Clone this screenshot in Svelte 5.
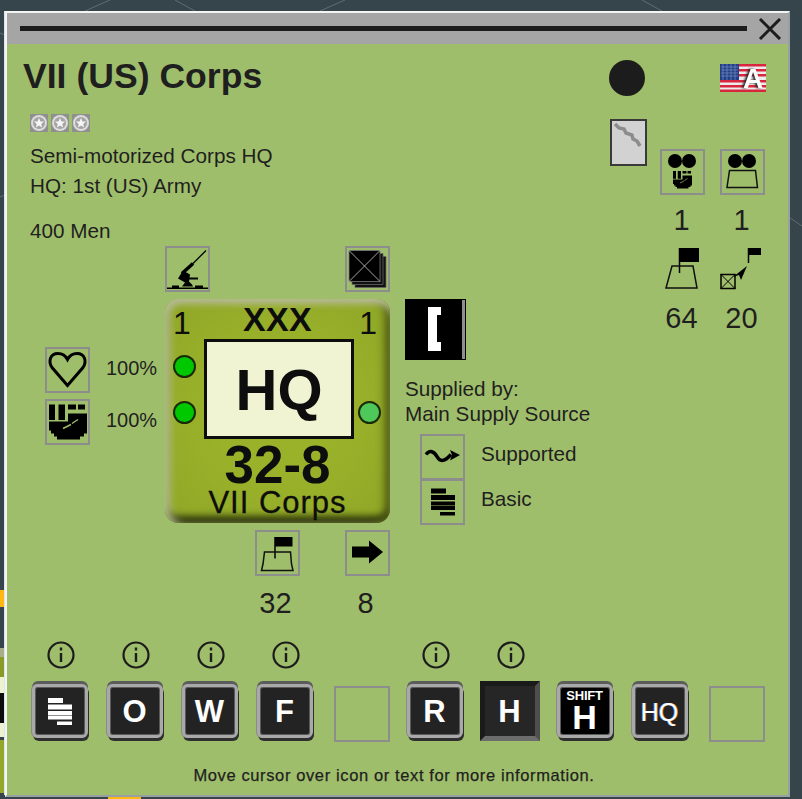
<script>
  const stars = [0, 1, 2];
  const keys = [
    { kind: 'icon', info: true },
    { kind: 'text', label: 'O', info: true },
    { kind: 'text', label: 'W', info: true },
    { kind: 'text', label: 'F', info: true },
    { kind: 'empty' },
    { kind: 'text', label: 'R', info: true },
    { kind: 'pressed', label: 'H', info: true },
    { kind: 'shift', label: 'H' },
    { kind: 'hq', label: 'HQ' },
    { kind: 'empty' }
  ];
</script>

{#snippet twoDots()}
  <circle cx="15" cy="11.500" r="7" />
  <circle cx="29" cy="11.500" r="7" />
{/snippet}

{#snippet fist()}
  <path d="M4 5h6v15.500H4zM13.500 5h6.500v15.500h-6.500zM23 5h8v5h-8zM33 5h7v5h-7zM23 14h19v8H23zM4 22h38v12h-3v3h-4v3H12v-3H9v-3H6v-3H4z" />
  <path d="M18 29l8-4M27 24l6-4" stroke="#9fbe6b" stroke-width="1.400" fill="none" />
{/snippet}

{#snippet stack()}
  <path d="M11 9h15v5H11zM11 15.500h24v5H11zM11 22h24v4H11zM11 26.500h24v4H11zM20 32.500h15V36H20z" />
{/snippet}

<div class="screen">
  <svg class="backdrop" width="802" height="799" viewBox="0 0 802 799" aria-hidden="true">
    <g stroke="#5f6d71" stroke-width="1" fill="none">
      <path d="M85 11l25-11M175 0l20 11M320 11l25-11M642 0l20 11M790 218l12 8M0 33l5 2M0 197l5-2" />
    </g>
    <rect x="0" y="590" width="4" height="17" fill="#fdb813" />
    <rect x="0" y="648" width="4" height="9" fill="#a9ad8a" />
    <rect x="0" y="657" width="4" height="20" fill="#8a9b2a" />
    <rect x="0" y="677" width="4" height="16" fill="#eef2d0" />
    <rect x="0" y="693" width="4" height="30" fill="#0c0c0c" />
    <rect x="0" y="723" width="4" height="14" fill="#eef2d0" />
    <rect x="0" y="740" width="4" height="53" fill="#93a82a" />
    <rect x="4" y="11" width="1" height="784" fill="#dfe5e6" />
    <rect x="108" y="797" width="33" height="2" fill="#fdb813" />
  </svg>

  <div class="window">
    <div class="titlebar">
      <div class="drag"></div>
      <svg class="close" width="24" height="22" viewBox="0 0 24 22" aria-label="Close">
        <path d="M2 1l20 20M22 1L2 21" stroke="#1c1c1c" stroke-width="3" fill="none" />
      </svg>
    </div>

    <div class="body">
      <section class="info">
        <h1>VII (US) Corps</h1>
        <div class="stars">
          {#each stars as s (s)}
            <svg width="18" height="18" viewBox="0 0 18 18">
              <rect width="18" height="18" fill="#8f8f8f" />
              <circle cx="9" cy="9" r="8" fill="#dcdcdc" />
              <circle cx="9" cy="9" r="6" fill="#a4a4a4" />
              <path d="M9 3.800l1.400 3.600 3.700.2-2.900 2.300 1 3.700L9 11.500l-3.200 2.100 1-3.700-2.900-2.300 3.700-.2z" fill="#f6f6f6" />
            </svg>
          {/each}
        </div>
        <p class="type">Semi-motorized Corps HQ</p>
        <p class="parent">HQ: 1st (US) Army</p>
        <p class="men">400 Men</p>
      </section>

      <section class="side">
        <div class="side-top">
          <div class="dot"></div>
          <svg class="flag" width="46" height="28" viewBox="0 0 46 28">
            <rect width="46" height="28" fill="#ececec" />
            <path d="M18 0h28v2.500H18zM18 5h28v2.500H18zM18 10h28v2.500H18zM0 16h46v2.500H0zM0 21h46v2.500H0zM0 25.500h46V28H0z" fill="#d9263f" />
            <rect width="19" height="16" fill="#1f3f88" />
            <path d="M1 3h17M1 6h17M1 9h17M1 12h17M3 0v16M7 0v16M11 0v16M15 0v16" stroke="#6f86b8" stroke-width=".8" />
            <text x="33" y="24" class="flag-a">A</text>
          </svg>
        </div>
        <div class="side-mid">
          <svg class="river" width="37" height="47" viewBox="0 0 37 47">
            <rect x="1" y="1" width="35" height="45" fill="#d2d2d2" stroke="#3a3a3a" stroke-width="2" />
            <path d="M5 5l4 4 5 1 2 4 6 2 1 4 4 2 3 5" fill="none" stroke="#8c8c8c" stroke-width="3.500" />
          </svg>
          <div class="stat-grid">
            <div class="box">
              <svg viewBox="0 0 45 45">
                {@render twoDots()}
                <g transform="translate(11 19) scale(.5)">
                  {@render fist()}
                </g>
              </svg>
            </div>
            <div class="box">
              <svg viewBox="0 0 45 45">
                {@render twoDots()}
                <path d="M9.500 21h26l2 17H7z" fill="none" stroke="#111" stroke-width="1.500" />
              </svg>
            </div>
            <span class="num">1</span>
            <span class="num">1</span>
            <div class="plain">
              <svg viewBox="0 0 45 45">
                <path d="M19 2h20v14H19z" fill="#000" />
                <path d="M19.500 2v25" stroke="#000" stroke-width="1.500" />
                <path d="M12 20h21l4 22H6z" fill="none" stroke="#111" stroke-width="1.500" />
              </svg>
            </div>
            <div class="plain">
              <svg viewBox="0 0 45 45">
                <path d="M28 2h13v7H28z" fill="#000" />
                <path d="M28.500 2v15" stroke="#000" stroke-width="1.500" />
                <path d="M13 31l14-11-6 14-2-5z" fill="#000" />
                <rect x="1" y="28.500" width="14" height="14" fill="none" stroke="#000" stroke-width="1.500" />
                <path d="M1 28.500l14 14M15 28.500l-14 14" stroke="#000" stroke-width="1" />
              </svg>
            </div>
            <span class="num low">64</span>
            <span class="num low">20</span>
          </div>
        </div>
      </section>

      <section class="vitals">
        <div class="vital">
          <div class="box">
            <svg viewBox="0 0 45 45">
              <path d="M22.500 38L7 20C3 14 5 6 13 6c5 0 8 3 9.500 6C24 9 27 6 32 6c8 0 10 8 6 14z" fill="none" stroke="#000" stroke-width="3" />
            </svg>
          </div>
          <span>100%</span>
        </div>
        <div class="vital">
          <div class="box">
            <svg viewBox="0 0 45 45">{@render fist()}</svg>
          </div>
          <span>100%</span>
        </div>
      </section>

      <section class="unit">
        <div class="unit-top">
          <div class="box">
            <svg viewBox="0 0 45 45">
              <path d="M41 4L27 18" stroke="#000" stroke-width="1.300" />
              <path d="M28 17L17 27" stroke="#000" stroke-width="3.500" />
              <path d="M13 32l5-8 7 4-1 7 3 3 1 2H17l3-4z" fill="#000" />
              <path d="M24 31h9v2h-9zM2 41h41v1.600H2zM7 39h7v2H7zM30 39h8v2h-8z" fill="#000" />
            </svg>
          </div>
          <div class="box">
            <svg viewBox="0 0 45 45">
              <path d="M10 10h31v31H10z" fill="#111" stroke="#666" stroke-width=".800" />
              <path d="M7 7h31v31H7z" fill="#111" stroke="#666" stroke-width=".800" />
              <path d="M4 4h31v31H4z" fill="#000" stroke="#777" stroke-width=".800" />
              <path d="M4 4l31 31M35 4L4 35" stroke="#cfcfcf" stroke-width=".800" />
            </svg>
          </div>
        </div>

        <div class="counter">
          <div class="counter-head">
            <span class="corner">1</span>
            <span class="echelon">XXX</span>
            <span class="corner end">1</span>
          </div>
          <div class="counter-mid">
            <div class="lamps">
              <i class="lamp"></i>
              <i class="lamp"></i>
            </div>
            <div class="symbol">HQ</div>
            <div class="lamps right">
              <i class="lamp pale"></i>
            </div>
          </div>
          <div class="values">32-8</div>
          <div class="unit-name">VII Corps</div>
        </div>

        <div class="unit-bottom">
          <div class="cell">
            <div class="box">
              <svg viewBox="0 0 45 45">
                <path d="M20 6.500h17.500V16H20z" fill="#000" />
                <path d="M20 6.500V28" stroke="#000" stroke-width="1.500" />
                <path d="M9.500 21.500h26l1 12 1.500 6.500H6.500L8 33.500z" fill="none" stroke="#111" stroke-width="1.500" />
              </svg>
            </div>
            <span class="num low shift-left">32</span>
          </div>
          <div class="cell">
            <div class="box">
              <svg viewBox="0 0 45 45">
                <path d="M7 16h17v-6l14 11.500L24 33v-6H7z" fill="#000" />
              </svg>
            </div>
            <span class="num low shift-left">8</span>
          </div>
        </div>
      </section>

      <section class="supply">
        <div class="bracket">
          <svg width="61" height="61" viewBox="0 0 61 61">
            <rect width="61" height="61" fill="#000" />
            <path d="M57 1h3v59h-3z" fill="#8f8f8f" />
            <path d="M23 8h13v8h-4v27h4v9H23z" fill="#fff" />
          </svg>
        </div>
        <p class="supplied">Supplied by:<br />Main Supply Source</p>
        <div class="supply-row">
          <div class="box">
            <svg viewBox="0 0 45 45">
              <path d="M6 20c4-5 8-3 11 2 3 6 8 5 14-2" fill="none" stroke="#000" stroke-width="3.500" />
              <path d="M30 15.500l10 5-10 5.500 2-5.500z" fill="#000" />
            </svg>
          </div>
          <span>Supported</span>
        </div>
        <div class="supply-row">
          <div class="box">
            <svg viewBox="0 0 45 45">{@render stack()}</svg>
          </div>
          <span>Basic</span>
        </div>
      </section>

      <section class="keys">
        {#each keys as key, i (i)}
          <div class="slot">
            <div class="info-mark">
              {#if key.info}
                <svg width="28" height="28" viewBox="0 0 28 28">
                  <circle cx="14" cy="14" r="12.500" fill="none" stroke="#1c1c1c" stroke-width="2.200" />
                  <path d="M14 6.500v3M14 12v9" stroke="#1c1c1c" stroke-width="2.400" />
                </svg>
              {/if}
            </div>
            {#if key.kind === 'empty'}
              <div class="key-empty"></div>
            {:else if key.kind === 'pressed'}
              <div class="key pressed">{key.label}</div>
            {:else if key.kind === 'shift'}
              <div class="key shift"><small>SHIFT</small><span>{key.label}</span></div>
            {:else if key.kind === 'hq'}
              <div class="key hq">{key.label}</div>
            {:else if key.kind === 'icon'}
              <div class="key">
                <svg class="key-icon" viewBox="0 0 45 45">{@render stack()}</svg>
              </div>
            {:else}
              <div class="key">{key.label}</div>
            {/if}
          </div>
        {/each}
      </section>

      <p class="hint">Move cursor over icon or text for more information.</p>
    </div>
  </div>
</div>

<style>
  :global(body) {
    margin: 0;
    background: #36454c;
  }
  .screen {
    position: relative;
    width: 802px;
    height: 799px;
    overflow: hidden;
    background: #36454c;
    font-family: "Liberation Sans", Arial, sans-serif;
    color: #1f1f1f;
  }
  .backdrop {
    position: absolute;
    inset: 0;
  }
  .window {
    position: relative;
    box-sizing: border-box;
    width: 785px;
    height: 786px;
    margin: 11px 0 0 5px;
    border-top: 2px solid #f4f4f4;
    border-left: 2px solid #f4f4f4;
    border-right: 2px solid #97a1a4;
    border-bottom: 2px solid #97a1a4;
    display: flex;
    flex-direction: column;
    background: #9fbe6b;
  }
  .titlebar {
    display: flex;
    align-items: center;
    height: 31px;
    flex: none;
    padding: 0 6px 0 13px;
    gap: 11px;
    background: #a5a5a5;
  }
  .drag {
    flex: 1;
    height: 5px;
    background: #1c1c1c;
  }
  .body {
    flex: 1;
    display: grid;
    grid-template-columns: 158px 240px 1fr 134px;
    grid-template-rows: 202px 395px 1fr;
    min-height: 0;
  }
  .info {
    grid-column: 1 / 4;
    grid-row: 1;
    padding: 14px 0 0 16px;
  }
  h1 {
    margin: 0;
    font-size: 35.600px;
    line-height: 36px;
    font-weight: 700;
  }
  .stars {
    display: flex;
    gap: 3px;
    margin: 20px 0 0 7px;
  }
  .stars svg {
    display: block;
  }
  p {
    margin: 0;
  }
  .info p {
    margin-left: 7px;
    font-size: 20.700px;
    line-height: 24px;
  }
  .type { padding-top: 12px; }
  .parent { padding-top: 6px; }
  .men { padding-top: 21px; }

  .side {
    grid-column: 3 / 5;
    grid-row: 1 / 3;
    padding-top: 15px;
    display: flex;
    flex-direction: column;
  }
  .side-top {
    display: flex;
    justify-content: space-between;
    align-items: center;
    margin-left: 204px;
    width: 157px;
    height: 38px;
  }
  .dot {
    width: 36px;
    height: 36px;
    border-radius: 50%;
    background: #1c1c1c;
  }
  .flag {
    overflow: visible;
  }
  .flag-a {
    font: 700 28px "Liberation Sans", Arial, sans-serif;
    fill: #fff;
    text-anchor: middle;
    filter: drop-shadow(-1.500px 0 1px #222);
  }
  .side-mid {
    display: flex;
    margin: 22px 0 0 205px;
  }
  .river {
    display: block;
  }
  .stat-grid {
    display: grid;
    grid-template-columns: 45px 45px;
    column-gap: 15px;
    margin: 30px 0 0 13px;
    justify-items: center;
  }
  .stat-grid .num {
    padding-right: 2px;
  }
  .box {
    box-sizing: border-box;
    width: 45px;
    height: 46px;
    border: 2px solid #8d8d8d;
    flex: none;
  }
  .box svg, .plain svg {
    display: block;
    width: 100%;
    height: 100%;
  }
  .box svg {
    margin: -2px;
    width: 45px;
    height: 46px;
  }
  .plain {
    width: 45px;
    height: 45px;
    margin-top: 1px;
  }
  .num {
    font-size: 29px;
    line-height: 50px;
    text-align: center;
  }
  .num.low {
    padding-top: 2px;
  }
  .num.shift-left {
    padding-right: 4px;
  }

  .vitals {
    grid-column: 1;
    grid-row: 2;
    padding: 101px 0 0 38px;
    display: flex;
    flex-direction: column;
    gap: 6px;
  }
  .vital {
    display: flex;
    align-items: center;
    gap: 16px;
    font-size: 20px;
  }
  .vital span {
    padding-bottom: 3px;
  }

  .unit {
    grid-column: 2;
    grid-row: 2;
    display: flex;
    flex-direction: column;
    width: 225px;
  }
  .unit-top, .unit-bottom {
    display: flex;
    justify-content: space-between;
  }
  .counter {
    box-sizing: border-box;
    width: 225px;
    height: 224px;
    margin-top: 7px;
    border-radius: 14px;
    background: radial-gradient(circle at 50% 50%, #9ab22a 40%, #8ea626 100%);
    box-shadow: inset 8px 0 8px -3px #b3bb8e, inset 0 8px 7px -3px #b9bd96, inset -8px 0 8px -3px #4d5a10, inset 0 -9px 7px -2px #2c330a;
    display: flex;
    flex-direction: column;
    color: #0d0d0d;
  }
  .counter-head {
    display: grid;
    grid-template-columns: 1fr auto 1fr;
    height: 40px;
  }
  .corner {
    font-size: 32px;
    line-height: 31px;
    padding: 9px 0 0 8px;
  }
  .corner.end {
    text-align: right;
    padding: 9px 13px 0 0;
  }
  .echelon {
    font-weight: 700;
    font-size: 34px;
    line-height: 38px;
    letter-spacing: .4px;
    padding-top: 1px;
  }
  .counter-mid {
    display: flex;
    padding-left: 8px;
  }
  .lamps {
    display: flex;
    flex-direction: column;
    gap: 23px;
    padding-top: 16px;
  }
  .lamps.right {
    justify-content: flex-end;
    padding: 0 0 15px 4px;
  }
  .lamp {
    display: block;
    box-sizing: border-box;
    width: 23px;
    height: 23px;
    border-radius: 50%;
    background: #00c800;
    border: 2px solid #1a2a08;
  }
  .lamp.pale {
    background: #4fc85a;
  }
  .symbol {
    box-sizing: border-box;
    width: 150px;
    height: 100px;
    margin-left: 8px;
    border: 3px solid #0d0d0d;
    background: #f0f4d2;
    display: flex;
    align-items: center;
    justify-content: center;
    font-size: 58px;
    font-weight: 700;
  }
  .values {
    text-align: center;
    font-size: 53px;
    line-height: 46px;
    font-weight: 700;
    margin-top: 3px;
  }
  .unit-name {
    text-align: center;
    font-size: 31px;
    line-height: 30px;
    letter-spacing: 1px;
    -webkit-text-stroke: .3px #0d0d0d;
  }
  .unit-bottom {
    margin-top: 7px;
    padding: 0 0 0 90px;
  }
  .cell {
    display: flex;
    flex-direction: column;
    align-items: center;
  }

  .supply {
    grid-column: 3;
    grid-row: 2;
    padding: 53px 0 0;
    font-size: 20.700px;
  }
  .bracket svg {
    display: block;
  }
  .supplied {
    margin-top: 16px;
    line-height: 25px;
    white-space: nowrap;
  }
  .supply-row {
    display: flex;
    align-items: center;
    gap: 16px;
    margin: -1px 0 0 15px;
    white-space: nowrap;
  }
  .supply-row span {
    padding-bottom: 6px;
  }
  .supplied + .supply-row {
    margin-top: 8px;
  }

  .keys {
    grid-column: 1 / 5;
    grid-row: 3;
    display: grid;
    grid-template-columns: repeat(10, 75px);
    padding-left: 15px;
    align-self: start;
  }
  .slot {
    display: flex;
    flex-direction: column;
    align-items: center;
  }
  .info-mark {
    height: 28px;
    margin: 0 0 12px 2px;
  }
  .info-mark svg {
    display: block;
  }
  .key, .key-empty {
    box-sizing: border-box;
  }
  .key-empty {
    width: 56px;
    height: 56px;
    margin: 5px 0 0 4px;
    border: 2px solid #8d8d8d;
  }
  .key {
    width: 56px;
    height: 54px;
    margin: 3px 0;
    padding-top: 2px;
    border-radius: 6px;
    background: #232323;
    border: 3px solid #a9a9a9;
    box-shadow: inset 0 0 0 1px #5a5a5a, -1px 0 0 #8a8a8a, 0 -3px 0 #5c5c5c, 1px 3px 0 #2f2f2f;
    display: flex;
    align-items: center;
    justify-content: center;
    color: #fff;
    font-size: 31px;
    font-weight: 700;
  }
  .key-icon {
    flex: none;
    width: 45px;
    height: 45px;
    margin-top: -2px;
    fill: #fff;
  }
  .key.pressed {
    width: 60px;
    height: 60px;
    margin: 0;
    border-radius: 0;
    border-width: 5px;
    border-color: #1a1a1a #4e4e4e #6c6c6c #1a1a1a;
    box-shadow: none;
    background: #262626;
  }
  .key.shift {
    flex-direction: column;
    padding-top: 0;
    background: #000;
    justify-content: flex-start;
  }
  .key.shift small {
    font-size: 13px;
    font-weight: 700;
    line-height: 13px;
    letter-spacing: -.2px;
    margin-top: 2px;
  }
  .key.shift span {
    font-size: 34px;
    line-height: 31px;
  }
  .key.hq {
    font-weight: 400;
    font-size: 25px;
    color: #fff;
    text-shadow: .8px 0 #c8701f, -.8px 0 #3f93e6;
  }
  .hint {
    grid-column: 1 / 5;
    grid-row: 3;
    align-self: start;
    margin-top: 125px;
    padding-right: 7px;
    text-align: center;
    font-size: 16.500px;
    letter-spacing: .62px;
    -webkit-text-stroke: .25px #1f1f1f;
  }
</style>
